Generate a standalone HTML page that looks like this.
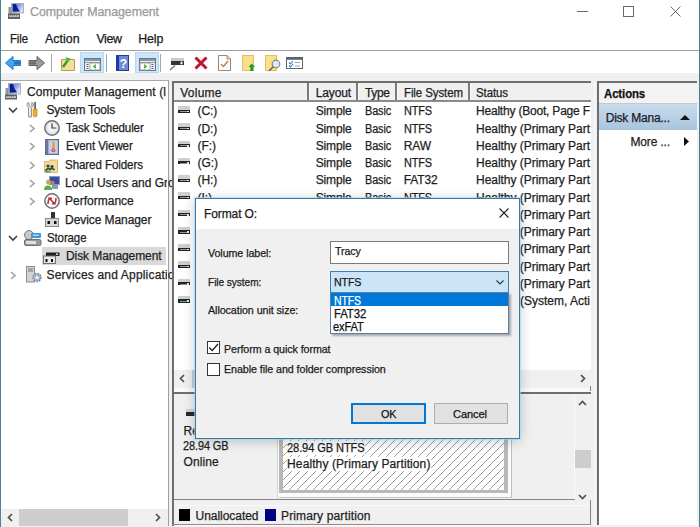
<!DOCTYPE html>
<html><head><meta charset="utf-8">
<style>
*{box-sizing:border-box;margin:0;padding:0}
html,body{width:700px;height:527px;overflow:hidden;background:#fff}
body{position:relative;font-family:"Liberation Sans",sans-serif;font-size:12px;color:#1e1e1e}
.a{position:absolute}
.t{position:absolute;white-space:nowrap;-webkit-text-stroke:0.25px currentColor}
svg{position:absolute;overflow:visible}
</style></head><body>
<div class="a" style="left:1px;top:73px;width:698px;height:454px;background:#f0f0f0;"></div>
<div class="a" style="left:0px;top:0px;width:1px;height:527px;background:#4a8698;"></div>
<div class="a" style="left:699px;top:0px;width:1px;height:527px;background:#4a7f9a;"></div>
<div class="t" style="left:30.00px;top:5.64px;font-size:12.4px;line-height:12.4px;letter-spacing:-0.065px;color:#999999;">Computer Management</div>
<div class="a" style="left:577px;top:11px;width:11px;height:1px;background:#6a6a6a;"></div>
<div class="a" style="left:623px;top:6px;width:11px;height:11px;border:1px solid #6a6a6a"></div>
<svg style="left:670px;top:6px;" width="11" height="11" viewBox="0 0 11 11"><path d="M0.5 0.5L10.5 10.5M10.5 0.5L0.5 10.5" stroke="#6a6a6a" stroke-width="1"/></svg>
<div class="t" style="left:10.30px;top:32.54px;font-size:12.4px;line-height:12.4px;letter-spacing:-0.100px;color:#1a1a1a;transform:scaleX(0.9148);transform-origin:0.00px 0;">File</div>
<div class="t" style="left:45.00px;top:32.54px;font-size:12.4px;line-height:12.4px;letter-spacing:0.048px;color:#1a1a1a;">Action</div>
<div class="t" style="left:96.40px;top:32.54px;font-size:12.4px;line-height:12.4px;letter-spacing:-0.328px;color:#1a1a1a;">View</div>
<div class="t" style="left:138.30px;top:32.54px;font-size:12.4px;line-height:12.4px;letter-spacing:-0.169px;color:#1a1a1a;">Help</div>
<div class="a" style="left:1px;top:50px;width:698px;height:1px;background:#a0a0a0;"></div>
<div class="a" style="left:1px;top:51px;width:698px;height:22px;background:#fff;"></div>
<div class="a" style="left:1px;top:80px;width:168px;height:446px;background:#fff;border-top:1px solid #a8a8a8;border-right:1px solid #a0a0a0"></div>
<div class="a" style="left:42px;top:247px;width:124px;height:18px;background:#d9d9d9;"></div>
<div class="t" style="left:27.00px;top:85.59px;font-size:12px;line-height:12px;letter-spacing:0.140px;color:#1e1e1e;">Computer Management (l</div>
<div class="t" style="left:46.50px;top:103.89px;font-size:12px;line-height:12px;letter-spacing:-0.221px;color:#1e1e1e;">System Tools</div>
<svg style="left:8px;top:106.8px;" width="10" height="6" viewBox="0 0 10 6"><path d="M1 1L5 5L9 1" fill="none" stroke="#404040" stroke-width="1.6"/></svg>
<div class="t" style="left:66.30px;top:122.19px;font-size:12px;line-height:12px;letter-spacing:-0.095px;color:#1e1e1e;transform:scaleX(0.9627);transform-origin:0.00px 0;">Task Scheduler</div>
<svg style="left:29px;top:124.1px;" width="6" height="9" viewBox="0 0 6 9"><path d="M1 1L5 4.5L1 8" fill="none" stroke="#a0a0a0" stroke-width="1.6"/></svg>
<div class="t" style="left:66.30px;top:140.49px;font-size:12px;line-height:12px;letter-spacing:-0.096px;color:#1e1e1e;transform:scaleX(0.9621);transform-origin:0.00px 0;">Event Viewer</div>
<svg style="left:29px;top:142.4px;" width="6" height="9" viewBox="0 0 6 9"><path d="M1 1L5 4.5L1 8" fill="none" stroke="#a0a0a0" stroke-width="1.6"/></svg>
<div class="t" style="left:65.10px;top:158.79px;font-size:12px;line-height:12px;letter-spacing:-0.095px;color:#1e1e1e;transform:scaleX(0.9652);transform-origin:0.00px 0;">Shared Folders</div>
<svg style="left:29px;top:160.7px;" width="6" height="9" viewBox="0 0 6 9"><path d="M1 1L5 4.5L1 8" fill="none" stroke="#a0a0a0" stroke-width="1.6"/></svg>
<div class="t" style="left:65.10px;top:177.09px;font-size:12px;line-height:12px;letter-spacing:-0.031px;color:#1e1e1e;">Local Users and Gro</div>
<svg style="left:29px;top:179.0px;" width="6" height="9" viewBox="0 0 6 9"><path d="M1 1L5 4.5L1 8" fill="none" stroke="#a0a0a0" stroke-width="1.6"/></svg>
<div class="t" style="left:65.10px;top:195.39px;font-size:12px;line-height:12px;letter-spacing:0.000px;color:#1e1e1e;">Performance</div>
<svg style="left:29px;top:197.3px;" width="6" height="9" viewBox="0 0 6 9"><path d="M1 1L5 4.5L1 8" fill="none" stroke="#a0a0a0" stroke-width="1.6"/></svg>
<div class="t" style="left:65.10px;top:213.69px;font-size:12px;line-height:12px;letter-spacing:-0.082px;color:#1e1e1e;">Device Manager</div>
<div class="t" style="left:46.50px;top:231.99px;font-size:12px;line-height:12px;letter-spacing:-0.105px;color:#1e1e1e;transform:scaleX(0.9543);transform-origin:0.00px 0;">Storage</div>
<svg style="left:8px;top:234.9px;" width="10" height="6" viewBox="0 0 10 6"><path d="M1 1L5 5L9 1" fill="none" stroke="#404040" stroke-width="1.6"/></svg>
<div class="t" style="left:66.00px;top:250.29px;font-size:12px;line-height:12px;letter-spacing:-0.079px;color:#1e1e1e;">Disk Management</div>
<div class="t" style="left:46.50px;top:268.59px;font-size:12px;line-height:12px;letter-spacing:0.179px;color:#1e1e1e;">Services and Applicatio</div>
<svg style="left:10px;top:270.5px;" width="6" height="9" viewBox="0 0 6 9"><path d="M1 1L5 4.5L1 8" fill="none" stroke="#a0a0a0" stroke-width="1.6"/></svg>
<div class="a" style="left:167px;top:81px;width:1px;height:430px;background:#fff;"></div>
<div class="a" style="left:1px;top:509px;width:167px;height:17px;background:#f0f0f0;"></div>
<div class="a" style="left:19px;top:509px;width:109px;height:17px;background:#cdcdcd;"></div>
<svg style="left:7px;top:513px;" width="6" height="9" viewBox="0 0 6 9"><path d="M5 1L1.5 4.5L5 8" fill="none" stroke="#505050" stroke-width="1.7"/></svg>
<svg style="left:155px;top:513px;" width="6" height="9" viewBox="0 0 6 9"><path d="M1 1L4.5 4.5L1 8" fill="none" stroke="#505050" stroke-width="1.7"/></svg>
<div class="a" style="left:172px;top:81px;width:419px;height:445px;background:#fff;border-left:2px solid #6e6e6e;border-top:2px solid #6e6e6e"></div>
<div class="a" style="left:172px;top:524px;width:419px;height:1px;background:#8a8a8a;"></div>
<div class="a" style="left:174px;top:83px;width:417px;height:17px;background:#f0f0f0;"></div>
<div class="a" style="left:174px;top:100px;width:417px;height:2px;background:#8a8a8a;"></div>
<div class="a" style="left:307px;top:83px;width:2px;height:17px;background:#7a7a7a;"></div>
<div class="a" style="left:309px;top:83px;width:1px;height:17px;background:#fafafa;"></div>
<div class="a" style="left:356px;top:83px;width:2px;height:17px;background:#7a7a7a;"></div>
<div class="a" style="left:358px;top:83px;width:1px;height:17px;background:#fafafa;"></div>
<div class="a" style="left:395px;top:83px;width:2px;height:17px;background:#7a7a7a;"></div>
<div class="a" style="left:397px;top:83px;width:1px;height:17px;background:#fafafa;"></div>
<div class="a" style="left:468px;top:83px;width:2px;height:17px;background:#7a7a7a;"></div>
<div class="a" style="left:470px;top:83px;width:1px;height:17px;background:#fafafa;"></div>
<div class="t" style="left:180.30px;top:86.59px;font-size:12px;line-height:12px;letter-spacing:0.216px;color:#1e1e1e;">Volume</div>
<div class="t" style="left:315.70px;top:86.59px;font-size:12px;line-height:12px;letter-spacing:-0.125px;color:#1e1e1e;">Layout</div>
<div class="t" style="left:364.90px;top:86.59px;font-size:12px;line-height:12px;letter-spacing:-0.305px;color:#1e1e1e;">Type</div>
<div class="t" style="left:403.70px;top:86.59px;font-size:12px;line-height:12px;letter-spacing:-0.094px;color:#1e1e1e;transform:scaleX(0.9557);transform-origin:0.00px 0;">File System</div>
<div class="t" style="left:476.00px;top:86.59px;font-size:12px;line-height:12px;letter-spacing:-0.102px;color:#1e1e1e;transform:scaleX(0.9549);transform-origin:0.00px 0;">Status</div>
<div class="a" style="left:178px;top:106.0px;width:12px;height:3.5px;background:#cfcfcf;"></div>
<div class="a" style="left:178px;top:109.5px;width:12px;height:3.2px;background:#1e2622;"></div>
<div class="a" style="left:180px;top:110.8px;width:8px;height:0.8px;background:#8a9a90;"></div>
<div class="a" style="left:187px;top:110.5px;width:2px;height:1.5px;background:#d8f0d8;"></div>
<div class="t" style="left:197.50px;top:105.29px;font-size:12px;line-height:12px;letter-spacing:-0.050px;color:#1e1e1e;">(C:)</div>
<div class="t" style="left:315.70px;top:105.29px;font-size:12px;line-height:12px;letter-spacing:-0.117px;color:#1e1e1e;">Simple</div>
<div class="t" style="left:364.90px;top:105.29px;font-size:12px;line-height:12px;letter-spacing:-0.110px;color:#1e1e1e;transform:scaleX(0.9066);transform-origin:0.00px 0;">Basic</div>
<div class="t" style="left:403.70px;top:105.29px;font-size:12px;line-height:12px;letter-spacing:-0.157px;color:#1e1e1e;transform:scaleX(0.9105);transform-origin:0.00px 0;">NTFS</div>
<div class="t" style="left:476.00px;top:105.29px;font-size:12px;line-height:12px;letter-spacing:-0.203px;color:#1e1e1e;">Healthy (Boot, Page F</div>
<div class="a" style="left:178px;top:123.27px;width:12px;height:3.5px;background:#cfcfcf;"></div>
<div class="a" style="left:178px;top:126.77px;width:12px;height:3.2px;background:#1e2622;"></div>
<div class="a" style="left:180px;top:128.07px;width:8px;height:0.8px;background:#8a9a90;"></div>
<div class="a" style="left:187px;top:127.77px;width:2px;height:1.5px;background:#d8f0d8;"></div>
<div class="t" style="left:197.50px;top:122.56px;font-size:12px;line-height:12px;letter-spacing:-0.050px;color:#1e1e1e;">(D:)</div>
<div class="t" style="left:315.70px;top:122.56px;font-size:12px;line-height:12px;letter-spacing:-0.117px;color:#1e1e1e;">Simple</div>
<div class="t" style="left:364.90px;top:122.56px;font-size:12px;line-height:12px;letter-spacing:-0.110px;color:#1e1e1e;transform:scaleX(0.9066);transform-origin:0.00px 0;">Basic</div>
<div class="t" style="left:403.70px;top:122.56px;font-size:12px;line-height:12px;letter-spacing:-0.157px;color:#1e1e1e;transform:scaleX(0.9105);transform-origin:0.00px 0;">NTFS</div>
<div class="t" style="left:476.00px;top:122.56px;font-size:12px;line-height:12px;letter-spacing:-0.035px;color:#1e1e1e;">Healthy (Primary Part</div>
<div class="a" style="left:178px;top:140.54px;width:12px;height:3.5px;background:#cfcfcf;"></div>
<div class="a" style="left:178px;top:144.04px;width:12px;height:3.2px;background:#1e2622;"></div>
<div class="a" style="left:180px;top:145.34px;width:8px;height:0.8px;background:#8a9a90;"></div>
<div class="a" style="left:187px;top:145.04px;width:2px;height:1.5px;background:#d8f0d8;"></div>
<div class="t" style="left:197.50px;top:139.83px;font-size:12px;line-height:12px;letter-spacing:-0.050px;color:#1e1e1e;">(F:)</div>
<div class="t" style="left:315.70px;top:139.83px;font-size:12px;line-height:12px;letter-spacing:-0.117px;color:#1e1e1e;">Simple</div>
<div class="t" style="left:364.90px;top:139.83px;font-size:12px;line-height:12px;letter-spacing:-0.110px;color:#1e1e1e;transform:scaleX(0.9066);transform-origin:0.00px 0;">Basic</div>
<div class="t" style="left:403.70px;top:139.83px;font-size:12px;line-height:12px;letter-spacing:-0.100px;color:#1e1e1e;">RAW</div>
<div class="t" style="left:476.00px;top:139.83px;font-size:12px;line-height:12px;letter-spacing:-0.035px;color:#1e1e1e;">Healthy (Primary Part</div>
<div class="a" style="left:178px;top:157.81px;width:12px;height:3.5px;background:#cfcfcf;"></div>
<div class="a" style="left:178px;top:161.31px;width:12px;height:3.2px;background:#1e2622;"></div>
<div class="a" style="left:180px;top:162.61px;width:8px;height:0.8px;background:#8a9a90;"></div>
<div class="a" style="left:187px;top:162.31px;width:2px;height:1.5px;background:#d8f0d8;"></div>
<div class="t" style="left:197.50px;top:157.10px;font-size:12px;line-height:12px;letter-spacing:-0.050px;color:#1e1e1e;">(G:)</div>
<div class="t" style="left:315.70px;top:157.10px;font-size:12px;line-height:12px;letter-spacing:-0.117px;color:#1e1e1e;">Simple</div>
<div class="t" style="left:364.90px;top:157.10px;font-size:12px;line-height:12px;letter-spacing:-0.110px;color:#1e1e1e;transform:scaleX(0.9066);transform-origin:0.00px 0;">Basic</div>
<div class="t" style="left:403.70px;top:157.10px;font-size:12px;line-height:12px;letter-spacing:-0.157px;color:#1e1e1e;transform:scaleX(0.9105);transform-origin:0.00px 0;">NTFS</div>
<div class="t" style="left:476.00px;top:157.10px;font-size:12px;line-height:12px;letter-spacing:-0.035px;color:#1e1e1e;">Healthy (Primary Part</div>
<div class="a" style="left:178px;top:175.08px;width:12px;height:3.5px;background:#cfcfcf;"></div>
<div class="a" style="left:178px;top:178.58px;width:12px;height:3.2px;background:#1e2622;"></div>
<div class="a" style="left:180px;top:179.88px;width:8px;height:0.8px;background:#8a9a90;"></div>
<div class="a" style="left:187px;top:179.58px;width:2px;height:1.5px;background:#d8f0d8;"></div>
<div class="t" style="left:197.50px;top:174.37px;font-size:12px;line-height:12px;letter-spacing:-0.050px;color:#1e1e1e;">(H:)</div>
<div class="t" style="left:315.70px;top:174.37px;font-size:12px;line-height:12px;letter-spacing:-0.117px;color:#1e1e1e;">Simple</div>
<div class="t" style="left:364.90px;top:174.37px;font-size:12px;line-height:12px;letter-spacing:-0.110px;color:#1e1e1e;transform:scaleX(0.9066);transform-origin:0.00px 0;">Basic</div>
<div class="t" style="left:403.70px;top:174.37px;font-size:12px;line-height:12px;letter-spacing:-0.100px;color:#1e1e1e;">FAT32</div>
<div class="t" style="left:476.00px;top:174.37px;font-size:12px;line-height:12px;letter-spacing:-0.035px;color:#1e1e1e;">Healthy (Primary Part</div>
<div class="a" style="left:178px;top:192.35px;width:12px;height:3.5px;background:#cfcfcf;"></div>
<div class="a" style="left:178px;top:195.85px;width:12px;height:3.2px;background:#1e2622;"></div>
<div class="a" style="left:180px;top:197.15px;width:8px;height:0.8px;background:#8a9a90;"></div>
<div class="a" style="left:187px;top:196.85px;width:2px;height:1.5px;background:#d8f0d8;"></div>
<div class="t" style="left:197.50px;top:191.64px;font-size:12px;line-height:12px;letter-spacing:-0.050px;color:#1e1e1e;">(I:)</div>
<div class="t" style="left:315.70px;top:191.64px;font-size:12px;line-height:12px;letter-spacing:-0.117px;color:#1e1e1e;">Simple</div>
<div class="t" style="left:364.90px;top:191.64px;font-size:12px;line-height:12px;letter-spacing:-0.110px;color:#1e1e1e;transform:scaleX(0.9066);transform-origin:0.00px 0;">Basic</div>
<div class="t" style="left:403.70px;top:191.64px;font-size:12px;line-height:12px;letter-spacing:-0.157px;color:#1e1e1e;transform:scaleX(0.9105);transform-origin:0.00px 0;">NTFS</div>
<div class="t" style="left:476.00px;top:191.64px;font-size:12px;line-height:12px;letter-spacing:-0.035px;color:#1e1e1e;">Healthy (Primary Part</div>
<div class="a" style="left:178px;top:209.62px;width:12px;height:3.5px;background:#cfcfcf;"></div>
<div class="a" style="left:178px;top:213.12px;width:12px;height:3.2px;background:#1e2622;"></div>
<div class="a" style="left:180px;top:214.42px;width:8px;height:0.8px;background:#8a9a90;"></div>
<div class="a" style="left:187px;top:214.12px;width:2px;height:1.5px;background:#d8f0d8;"></div>
<div class="t" style="left:197.50px;top:208.91px;font-size:12px;line-height:12px;letter-spacing:-0.050px;color:#1e1e1e;">(J:)</div>
<div class="t" style="left:315.70px;top:208.91px;font-size:12px;line-height:12px;letter-spacing:-0.117px;color:#1e1e1e;">Simple</div>
<div class="t" style="left:364.90px;top:208.91px;font-size:12px;line-height:12px;letter-spacing:-0.110px;color:#1e1e1e;transform:scaleX(0.9066);transform-origin:0.00px 0;">Basic</div>
<div class="t" style="left:403.70px;top:208.91px;font-size:12px;line-height:12px;letter-spacing:-0.157px;color:#1e1e1e;transform:scaleX(0.9105);transform-origin:0.00px 0;">NTFS</div>
<div class="t" style="left:476.00px;top:208.91px;font-size:12px;line-height:12px;letter-spacing:-0.035px;color:#1e1e1e;">Healthy (Primary Part</div>
<div class="a" style="left:178px;top:226.89px;width:12px;height:3.5px;background:#cfcfcf;"></div>
<div class="a" style="left:178px;top:230.39px;width:12px;height:3.2px;background:#1e2622;"></div>
<div class="a" style="left:180px;top:231.69px;width:8px;height:0.8px;background:#8a9a90;"></div>
<div class="a" style="left:187px;top:231.39px;width:2px;height:1.5px;background:#d8f0d8;"></div>
<div class="t" style="left:197.50px;top:226.18px;font-size:12px;line-height:12px;letter-spacing:-0.050px;color:#1e1e1e;">(K:)</div>
<div class="t" style="left:315.70px;top:226.18px;font-size:12px;line-height:12px;letter-spacing:-0.117px;color:#1e1e1e;">Simple</div>
<div class="t" style="left:364.90px;top:226.18px;font-size:12px;line-height:12px;letter-spacing:-0.110px;color:#1e1e1e;transform:scaleX(0.9066);transform-origin:0.00px 0;">Basic</div>
<div class="t" style="left:403.70px;top:226.18px;font-size:12px;line-height:12px;letter-spacing:-0.157px;color:#1e1e1e;transform:scaleX(0.9105);transform-origin:0.00px 0;">NTFS</div>
<div class="t" style="left:476.00px;top:226.18px;font-size:12px;line-height:12px;letter-spacing:-0.035px;color:#1e1e1e;">Healthy (Primary Part</div>
<div class="a" style="left:178px;top:244.16px;width:12px;height:3.5px;background:#cfcfcf;"></div>
<div class="a" style="left:178px;top:247.66px;width:12px;height:3.2px;background:#1e2622;"></div>
<div class="a" style="left:180px;top:248.96px;width:8px;height:0.8px;background:#8a9a90;"></div>
<div class="a" style="left:187px;top:248.66px;width:2px;height:1.5px;background:#d8f0d8;"></div>
<div class="t" style="left:197.50px;top:243.45px;font-size:12px;line-height:12px;letter-spacing:-0.050px;color:#1e1e1e;">(L:)</div>
<div class="t" style="left:315.70px;top:243.45px;font-size:12px;line-height:12px;letter-spacing:-0.117px;color:#1e1e1e;">Simple</div>
<div class="t" style="left:364.90px;top:243.45px;font-size:12px;line-height:12px;letter-spacing:-0.110px;color:#1e1e1e;transform:scaleX(0.9066);transform-origin:0.00px 0;">Basic</div>
<div class="t" style="left:403.70px;top:243.45px;font-size:12px;line-height:12px;letter-spacing:-0.157px;color:#1e1e1e;transform:scaleX(0.9105);transform-origin:0.00px 0;">NTFS</div>
<div class="t" style="left:476.00px;top:243.45px;font-size:12px;line-height:12px;letter-spacing:-0.035px;color:#1e1e1e;">Healthy (Primary Part</div>
<div class="a" style="left:178px;top:261.43px;width:12px;height:3.5px;background:#cfcfcf;"></div>
<div class="a" style="left:178px;top:264.93px;width:12px;height:3.2px;background:#1e2622;"></div>
<div class="a" style="left:180px;top:266.23px;width:8px;height:0.8px;background:#8a9a90;"></div>
<div class="a" style="left:187px;top:265.93px;width:2px;height:1.5px;background:#d8f0d8;"></div>
<div class="t" style="left:197.50px;top:260.72px;font-size:12px;line-height:12px;letter-spacing:-0.050px;color:#1e1e1e;">(M:)</div>
<div class="t" style="left:315.70px;top:260.72px;font-size:12px;line-height:12px;letter-spacing:-0.117px;color:#1e1e1e;">Simple</div>
<div class="t" style="left:364.90px;top:260.72px;font-size:12px;line-height:12px;letter-spacing:-0.110px;color:#1e1e1e;transform:scaleX(0.9066);transform-origin:0.00px 0;">Basic</div>
<div class="t" style="left:403.70px;top:260.72px;font-size:12px;line-height:12px;letter-spacing:-0.157px;color:#1e1e1e;transform:scaleX(0.9105);transform-origin:0.00px 0;">NTFS</div>
<div class="t" style="left:476.00px;top:260.72px;font-size:12px;line-height:12px;letter-spacing:-0.035px;color:#1e1e1e;">Healthy (Primary Part</div>
<div class="a" style="left:178px;top:278.7px;width:12px;height:3.5px;background:#cfcfcf;"></div>
<div class="a" style="left:178px;top:282.2px;width:12px;height:3.2px;background:#1e2622;"></div>
<div class="a" style="left:180px;top:283.5px;width:8px;height:0.8px;background:#8a9a90;"></div>
<div class="a" style="left:187px;top:283.2px;width:2px;height:1.5px;background:#d8f0d8;"></div>
<div class="t" style="left:197.50px;top:277.99px;font-size:12px;line-height:12px;letter-spacing:-0.050px;color:#1e1e1e;">(N:)</div>
<div class="t" style="left:315.70px;top:277.99px;font-size:12px;line-height:12px;letter-spacing:-0.117px;color:#1e1e1e;">Simple</div>
<div class="t" style="left:364.90px;top:277.99px;font-size:12px;line-height:12px;letter-spacing:-0.110px;color:#1e1e1e;transform:scaleX(0.9066);transform-origin:0.00px 0;">Basic</div>
<div class="t" style="left:403.70px;top:277.99px;font-size:12px;line-height:12px;letter-spacing:-0.157px;color:#1e1e1e;transform:scaleX(0.9105);transform-origin:0.00px 0;">NTFS</div>
<div class="t" style="left:476.00px;top:277.99px;font-size:12px;line-height:12px;letter-spacing:-0.035px;color:#1e1e1e;">Healthy (Primary Part</div>
<div class="a" style="left:178px;top:295.97px;width:12px;height:3.5px;background:#cfcfcf;"></div>
<div class="a" style="left:178px;top:299.47px;width:12px;height:3.2px;background:#1e2622;"></div>
<div class="a" style="left:180px;top:300.77px;width:8px;height:0.8px;background:#8a9a90;"></div>
<div class="a" style="left:187px;top:300.47px;width:2px;height:1.5px;background:#d8f0d8;"></div>
<div class="t" style="left:197.50px;top:295.26px;font-size:12px;line-height:12px;letter-spacing:-0.050px;color:#1e1e1e;"></div>
<div class="t" style="left:315.70px;top:295.26px;font-size:12px;line-height:12px;letter-spacing:-0.117px;color:#1e1e1e;">Simple</div>
<div class="t" style="left:364.90px;top:295.26px;font-size:12px;line-height:12px;letter-spacing:-0.110px;color:#1e1e1e;transform:scaleX(0.9066);transform-origin:0.00px 0;">Basic</div>
<div class="t" style="left:403.70px;top:295.26px;font-size:12px;line-height:12px;letter-spacing:-0.157px;color:#1e1e1e;transform:scaleX(0.9105);transform-origin:0.00px 0;">NTFS</div>
<div class="t" style="left:476.00px;top:295.26px;font-size:12px;line-height:12px;letter-spacing:-0.002px;color:#1e1e1e;">Healthy (System, Acti</div>
<div class="a" style="left:591px;top:83px;width:5px;height:443px;background:#f0f0f0;"></div>
<div class="a" style="left:594px;top:83px;width:1px;height:443px;background:#fafafa;"></div>
<div class="a" style="left:174px;top:370px;width:417px;height:18px;background:#f0f0f0;"></div>
<div class="a" style="left:192px;top:370px;width:200px;height:18px;background:#cdcdcd;"></div>
<svg style="left:179px;top:374px;" width="6" height="9" viewBox="0 0 6 9"><path d="M5 1L1.5 4.5L5 8" fill="none" stroke="#505050" stroke-width="1.7"/></svg>
<svg style="left:580px;top:374px;" width="6" height="9" viewBox="0 0 6 9"><path d="M1 1L4.5 4.5L1 8" fill="none" stroke="#505050" stroke-width="1.7"/></svg>
<div class="a" style="left:174px;top:388px;width:417px;height:4px;background:#fafafa;"></div>
<div class="a" style="left:590px;top:386px;width:1px;height:5px;background:#808080;"></div>
<div class="a" style="left:174px;top:392px;width:417px;height:2px;background:#6e6e6e;"></div>
<div class="a" style="left:174px;top:394px;width:417px;height:105px;background:#f0f0f0;"></div>
<div class="a" style="left:277px;top:394px;width:1px;height:105px;background:#d4d4d4;"></div>
<div class="a" style="left:278px;top:394px;width:1px;height:105px;background:#fafafa;"></div>
<div class="a" style="left:186px;top:408.8px;width:12px;height:3px;background:#d4d4d4;"></div>
<div class="a" style="left:186px;top:411.8px;width:12px;height:3.8px;background:#2a2a2a;"></div>
<div class="t" style="left:183.60px;top:424.99px;font-size:12px;line-height:12px;letter-spacing:-0.100px;color:#1e1e1e;">Removable</div>
<div class="t" style="left:183.10px;top:440.29px;font-size:12px;line-height:12px;letter-spacing:-0.109px;color:#1e1e1e;transform:scaleX(0.9111);transform-origin:0.00px 0;">28.94 GB</div>
<div class="t" style="left:183.60px;top:455.69px;font-size:12px;line-height:12px;letter-spacing:0.062px;color:#1e1e1e;">Online</div>
<div class="a" style="left:279px;top:395px;width:233px;height:103px;background:#fbfbfb;border-right:1px solid #c0c0c0;border-bottom:1px solid #c8c8c8"></div>
<div class="a" style="left:279px;top:396px;width:229px;height:97px;background:#b8b8b8"></div>
<div class="a" style="left:283px;top:400px;width:221px;height:90px;background:#fff;overflow:hidden"><svg width="221" height="90" style="left:0;top:0"><path d="M-120 120L0 0" stroke="#8a8a8a" stroke-width="0.8"/><path d="M-112 120L8 0" stroke="#8a8a8a" stroke-width="0.8"/><path d="M-104 120L16 0" stroke="#8a8a8a" stroke-width="0.8"/><path d="M-96 120L24 0" stroke="#8a8a8a" stroke-width="0.8"/><path d="M-88 120L32 0" stroke="#8a8a8a" stroke-width="0.8"/><path d="M-80 120L40 0" stroke="#8a8a8a" stroke-width="0.8"/><path d="M-72 120L48 0" stroke="#8a8a8a" stroke-width="0.8"/><path d="M-64 120L56 0" stroke="#8a8a8a" stroke-width="0.8"/><path d="M-56 120L64 0" stroke="#8a8a8a" stroke-width="0.8"/><path d="M-48 120L72 0" stroke="#8a8a8a" stroke-width="0.8"/><path d="M-40 120L80 0" stroke="#8a8a8a" stroke-width="0.8"/><path d="M-32 120L88 0" stroke="#8a8a8a" stroke-width="0.8"/><path d="M-24 120L96 0" stroke="#8a8a8a" stroke-width="0.8"/><path d="M-16 120L104 0" stroke="#8a8a8a" stroke-width="0.8"/><path d="M-8 120L112 0" stroke="#8a8a8a" stroke-width="0.8"/><path d="M0 120L120 0" stroke="#8a8a8a" stroke-width="0.8"/><path d="M8 120L128 0" stroke="#8a8a8a" stroke-width="0.8"/><path d="M16 120L136 0" stroke="#8a8a8a" stroke-width="0.8"/><path d="M24 120L144 0" stroke="#8a8a8a" stroke-width="0.8"/><path d="M32 120L152 0" stroke="#8a8a8a" stroke-width="0.8"/><path d="M40 120L160 0" stroke="#8a8a8a" stroke-width="0.8"/><path d="M48 120L168 0" stroke="#8a8a8a" stroke-width="0.8"/><path d="M56 120L176 0" stroke="#8a8a8a" stroke-width="0.8"/><path d="M64 120L184 0" stroke="#8a8a8a" stroke-width="0.8"/><path d="M72 120L192 0" stroke="#8a8a8a" stroke-width="0.8"/><path d="M80 120L200 0" stroke="#8a8a8a" stroke-width="0.8"/><path d="M88 120L208 0" stroke="#8a8a8a" stroke-width="0.8"/><path d="M96 120L216 0" stroke="#8a8a8a" stroke-width="0.8"/><path d="M104 120L224 0" stroke="#8a8a8a" stroke-width="0.8"/><path d="M112 120L232 0" stroke="#8a8a8a" stroke-width="0.8"/><path d="M120 120L240 0" stroke="#8a8a8a" stroke-width="0.8"/><path d="M128 120L248 0" stroke="#8a8a8a" stroke-width="0.8"/><path d="M136 120L256 0" stroke="#8a8a8a" stroke-width="0.8"/><path d="M144 120L264 0" stroke="#8a8a8a" stroke-width="0.8"/><path d="M152 120L272 0" stroke="#8a8a8a" stroke-width="0.8"/><path d="M160 120L280 0" stroke="#8a8a8a" stroke-width="0.8"/><path d="M168 120L288 0" stroke="#8a8a8a" stroke-width="0.8"/><path d="M176 120L296 0" stroke="#8a8a8a" stroke-width="0.8"/><path d="M184 120L304 0" stroke="#8a8a8a" stroke-width="0.8"/><path d="M192 120L312 0" stroke="#8a8a8a" stroke-width="0.8"/><path d="M200 120L320 0" stroke="#8a8a8a" stroke-width="0.8"/><path d="M208 120L328 0" stroke="#8a8a8a" stroke-width="0.8"/><path d="M216 120L336 0" stroke="#8a8a8a" stroke-width="0.8"/><path d="M224 120L344 0" stroke="#8a8a8a" stroke-width="0.8"/><path d="M232 120L352 0" stroke="#8a8a8a" stroke-width="0.8"/></svg></div>
<div class="t" style="left:287.10px;top:442.09px;font-size:12px;line-height:12px;letter-spacing:-0.107px;color:#1e1e1e;transform:scaleX(0.9240);transform-origin:0.00px 0;"><span style="background:#fff">28.94 GB NTFS</span></div>
<div class="t" style="left:287.10px;top:457.89px;font-size:12px;line-height:12px;letter-spacing:0.100px;color:#1e1e1e;"><span style="background:#fff">Healthy (Primary Partition)</span></div>
<div class="a" style="left:574px;top:394px;width:1px;height:110px;background:#fafafa;"></div>
<div class="a" style="left:575px;top:394px;width:16px;height:110px;background:#f0f0f0;"></div>
<div class="a" style="left:575px;top:450px;width:16px;height:18px;background:#cdcdcd;"></div>
<svg style="left:578px;top:400px;" width="9" height="6" viewBox="0 0 9 6"><path d="M1 5L4.5 1.5L8 5" fill="none" stroke="#505050" stroke-width="1.7"/></svg>
<svg style="left:578px;top:494px;" width="9" height="6" viewBox="0 0 9 6"><path d="M1 1L4.5 4.5L8 1" fill="none" stroke="#505050" stroke-width="1.7"/></svg>
<div class="a" style="left:174px;top:499px;width:401px;height:1px;background:#858585;"></div>
<div class="a" style="left:174px;top:500px;width:417px;height:24px;background:#f0f0f0;"></div>
<div class="a" style="left:175px;top:505px;width:415px;height:1px;background:#fafafa;"></div>
<div class="a" style="left:179px;top:509px;width:11px;height:12px;background:#000;"></div>
<div class="t" style="left:195.50px;top:509.59px;font-size:12px;line-height:12px;letter-spacing:-0.037px;color:#1e1e1e;">Unallocated</div>
<div class="a" style="left:265px;top:509px;width:11px;height:12px;background:#000080;"></div>
<div class="t" style="left:281.00px;top:509.59px;font-size:12px;line-height:12px;letter-spacing:0.128px;color:#1e1e1e;">Primary partition</div>
<div class="a" style="left:590px;top:500px;width:1px;height:25px;background:#808080;"></div>
<div class="a" style="left:597px;top:81px;width:100px;height:445px;background:#fff;border-left:2px solid #6e6e6e;border-top:2px solid #6e6e6e"></div>
<div class="a" style="left:597px;top:525px;width:102px;height:2px;background:#f0f0f0;"></div>
<div class="a" style="left:599px;top:83px;width:98px;height:20px;background:#f3f3f3;"></div>
<div class="a" style="left:599px;top:103px;width:98px;height:1px;background:#c8c8c8;"></div>
<div class="t" style="left:603.80px;top:87.99px;font-size:12px;line-height:12px;letter-spacing:-0.110px;color:#111;transform:scaleX(0.9505);transform-origin:0.00px 0;font-weight:bold">Actions</div>
<div class="a" style="left:599px;top:104px;width:98px;height:26px;background:linear-gradient(#c9dcee,#a9c4dd)"></div>
<div class="t" style="left:605.70px;top:111.59px;font-size:12px;line-height:12px;letter-spacing:-0.217px;color:#1a1a2a;">Disk Mana...</div>
<svg style="left:680px;top:115px;" width="10" height="5" viewBox="0 0 10 5"><path d="M0 5L5 0L10 5Z" fill="#111"/></svg>
<div class="t" style="left:630.50px;top:135.99px;font-size:12px;line-height:12px;letter-spacing:-0.169px;color:#1e1e1e;">More ...</div>
<svg style="left:684px;top:137px;" width="5" height="9" viewBox="0 0 5 9"><path d="M0 0L5 4.5L0 9Z" fill="#111"/></svg>
<div class="a" style="left:195px;top:198px;width:325px;height:241px;background:#f0f0f0;border:1px solid #3a78aa;box-shadow:0 0 0 1px rgba(170,215,240,0.6),0 2px 12px rgba(0,0,0,0.22)"></div>
<div class="a" style="left:196px;top:199px;width:323px;height:30px;background:#fff;"></div>
<div class="t" style="left:204.40px;top:207.94px;font-size:12.4px;line-height:12.4px;letter-spacing:-0.105px;color:#1a1a1a;transform:scaleX(0.9677);transform-origin:0.00px 0;">Format O:</div>
<svg style="left:499px;top:208px;" width="10" height="10" viewBox="0 0 10 10"><path d="M0.5 0.5L9.5 9.5M9.5 0.5L0.5 9.5" stroke="#222" stroke-width="1.1"/></svg>
<div class="t" style="left:207.60px;top:247.68px;font-size:11.2px;line-height:11.2px;letter-spacing:-0.084px;color:#1a1a1a;transform:scaleX(0.9572);transform-origin:0.00px 0;">Volume label:</div>
<div class="t" style="left:207.60px;top:276.68px;font-size:11.2px;line-height:11.2px;letter-spacing:-0.081px;color:#1a1a1a;transform:scaleX(0.9075);transform-origin:0.00px 0;">File system:</div>
<div class="t" style="left:207.60px;top:304.68px;font-size:11.2px;line-height:11.2px;letter-spacing:-0.072px;color:#1a1a1a;transform:scaleX(0.9573);transform-origin:0.00px 0;">Allocation unit size:</div>
<div class="a" style="left:330px;top:241px;width:179px;height:23px;background:#fff;border:1px solid #7a7a7a"></div>
<div class="t" style="left:335.00px;top:246.18px;font-size:11.2px;line-height:11.2px;letter-spacing:-0.103px;color:#1a1a1a;transform:scaleX(0.9495);transform-origin:0.00px 0;">Tracy</div>
<div class="a" style="left:330px;top:271px;width:179px;height:22px;background:#cce4f7;border:1px solid #3c7fb1"></div>
<div class="t" style="left:334.30px;top:276.61px;font-size:11.8px;line-height:11.8px;letter-spacing:-0.154px;color:#1a1a1a;transform:scaleX(0.9062);transform-origin:0.00px 0;">NTFS</div>
<svg style="left:496px;top:280px;" width="8" height="5" viewBox="0 0 8 5"><path d="M0.5 0.5L4 4L7.5 0.5" fill="none" stroke="#333" stroke-width="1.1"/></svg>
<div class="a" style="left:330px;top:292px;width:179px;height:42px;background:#fff;border:1px solid #5a7ea8;box-shadow:2px 2px 2px rgba(0,0,0,0.3)"></div>
<div class="a" style="left:331px;top:293px;width:177px;height:13px;background:#0078d7;"></div>
<div class="t" style="left:334.00px;top:294.77px;font-size:12.2px;line-height:12.2px;letter-spacing:-0.159px;color:#fff;transform:scaleX(0.8605);transform-origin:0.00px 0;">NTFS</div>
<div class="t" style="left:333.50px;top:307.77px;font-size:12.2px;line-height:12.2px;letter-spacing:-0.131px;color:#111;transform:scaleX(0.9359);transform-origin:0.00px 0;">FAT32</div>
<div class="t" style="left:333.00px;top:320.57px;font-size:12.2px;line-height:12.2px;letter-spacing:-0.129px;color:#111;transform:scaleX(0.9105);transform-origin:0.00px 0;">exFAT</div>
<div class="a" style="left:207px;top:341px;width:13px;height:13px;background:#fff;border:1px solid #333"></div>
<svg style="left:208px;top:342px;" width="11" height="11" viewBox="0 0 11 11"><path d="M1.2 5.5L4.2 8.5L10 2" fill="none" stroke="#222" stroke-width="1.3"/></svg>
<div class="t" style="left:224.00px;top:343.68px;font-size:11.2px;line-height:11.2px;letter-spacing:-0.081px;color:#1a1a1a;transform:scaleX(0.9563);transform-origin:0.00px 0;">Perform a quick format</div>
<div class="a" style="left:207px;top:363px;width:13px;height:13px;background:#fff;border:1px solid #333"></div>
<div class="t" style="left:224.00px;top:364.38px;font-size:11.2px;line-height:11.2px;letter-spacing:-0.078px;color:#1a1a1a;transform:scaleX(0.9571);transform-origin:0.00px 0;">Enable file and folder compression</div>
<div class="a" style="left:351px;top:403px;width:75px;height:21px;background:#e1e1e1;border:2px solid #0078d7"></div>
<div class="t" style="left:380.60px;top:407.94px;font-size:11.6px;line-height:11.6px;letter-spacing:-0.251px;color:#111;transform:scaleX(0.9327);transform-origin:0.00px 0;">OK</div>
<div class="a" style="left:434px;top:403px;width:74px;height:21px;background:#e1e1e1;border:1px solid #adadad"></div>
<div class="t" style="left:453.00px;top:407.94px;font-size:11.6px;line-height:11.6px;letter-spacing:-0.108px;color:#111;transform:scaleX(0.9559);transform-origin:0.00px 0;">Cancel</div>
<svg style="left:7px;top:2px;" width="18" height="18" viewBox="0 0 18 18"><defs><linearGradient id="scr" x1="0" y1="0" x2="1" y2="0.6"><stop offset="0" stop-color="#5a6ed8"/><stop offset="0.55" stop-color="#8a9ae8"/><stop offset="1" stop-color="#dde4fa"/></linearGradient></defs><rect x="4" y="1" width="13" height="10.5" fill="#a8b0c0"/><rect x="5" y="2" width="11" height="8.5" fill="url(#scr)"/><path d="M6 2H9L10.5 6L13 9.5H6Z" fill="#0e1e8a"/><rect x="1.5" y="5" width="3" height="7" fill="#8a9a8a"/><rect x="1" y="11.5" width="12" height="5.5" fill="#5e6462"/><rect x="2" y="13" width="10" height="2" fill="#b8bcc0"/><path d="M3 13h1M5 13h1M7 13h1M9 13h1" stroke="#555" stroke-width="1"/></svg>
<svg style="left:5px;top:56px;" width="17" height="15" viewBox="0 0 17 15"><path d="M0.5 7L8 0.5V4.5H15.5V9.5H8V13.5Z" fill="#3fa8ee" stroke="#2a78b8" stroke-width="1"/><rect x="9" y="5.5" width="6" height="3" fill="#1e74c8"/></svg>
<svg style="left:28px;top:56px;" width="17" height="15" viewBox="0 0 17 15"><path d="M16.5 7L9 0.5V4.5H1V9.5H9V13.5Z" fill="#9a9a9a" stroke="#5e5e5e" stroke-width="1"/><rect x="2" y="5.5" width="6" height="3" fill="#6e6e6e"/></svg>
<div class="a" style="left:51px;top:54px;width:1px;height:18px;background:#a8a8a8;"></div>
<svg style="left:61px;top:56px;" width="15" height="16" viewBox="0 0 15 16"><path d="M0.5 3.5H13.5V14.5H0.5Z" fill="#f6dc94" stroke="#b89a5a" stroke-width="1"/><path d="M2 11L7 4" stroke="#2e9a2e" stroke-width="2.4"/><path d="M4.5 1L10 2.5L6.5 7Z" fill="#4cbf3c"/></svg>
<div class="a" style="left:80px;top:52px;width:24px;height:21px;background:#cce6fa;border:1px solid #b4d8f4"></div>
<div class="a" style="left:135px;top:52px;width:24px;height:21px;background:#cce6fa;border:1px solid #b4d8f4"></div>
<svg style="left:84px;top:58px;" width="17" height="13" viewBox="0 0 17 13"><rect x="0.5" y="0.5" width="16" height="12" fill="#eef0f2" stroke="#6a7682"/><rect x="1" y="1" width="15" height="2" fill="#8a96a2"/><path d="M1 4.5H16" stroke="#8a939c"/><rect x="6" y="5" width="10" height="7" fill="#fff" stroke="#8a939c" stroke-width="0.8"/><path d="M2.5 6.5h2M2.5 8.5h2M2.5 10.5h2" stroke="#5c6670"/><path d="M12 6L8.5 8.5L12 11Z" fill="#5fb040"/></svg>
<div class="a" style="left:106px;top:54px;width:1px;height:18px;background:#a8a8a8;"></div>
<svg style="left:116px;top:55px;" width="13" height="16" viewBox="0 0 13 16"><rect x="0" y="0" width="13" height="16" fill="#223c9c"/><rect x="3" y="1" width="9" height="14" fill="#6f8ad4"/><text x="7.5" y="12.5" font-family="Liberation Sans" font-weight="bold" font-size="12" fill="#fff" text-anchor="middle">?</text></svg>
<svg style="left:139px;top:58px;" width="17" height="13" viewBox="0 0 17 13"><rect x="0.5" y="0.5" width="16" height="12" fill="#eef0f2" stroke="#6a7682"/><rect x="1" y="1" width="15" height="2" fill="#8a96a2"/><path d="M1 4.5H16" stroke="#8a939c"/><rect x="1" y="5" width="10" height="7" fill="#fff" stroke="#8a939c" stroke-width="0.8"/><path d="M12.5 6.5h2M12.5 8.5h2M12.5 10.5h2" stroke="#5c6670"/><path d="M5 6L8.5 8.5L5 11Z" fill="#5fb040"/></svg>
<div class="a" style="left:160px;top:54px;width:1px;height:18px;background:#a8a8a8;"></div>
<svg style="left:169px;top:57px;" width="17" height="14" viewBox="0 0 17 14"><rect x="2" y="1" width="13" height="4" fill="#c8ccd0"/><rect x="2" y="4" width="13" height="4" fill="#2e3438"/><path d="M11 6h3M12.5 4.5v3" stroke="#fff" stroke-width="1"/><path d="M1 13L6 8.5" stroke="#707880" stroke-width="1.4"/></svg>
<svg style="left:194px;top:56px;" width="14" height="14" viewBox="0 0 14 14"><path d="M1.5 1.5L12.5 12.5M12.5 1.5L1.5 12.5" stroke="#c4122e" stroke-width="3"/></svg>
<svg style="left:218px;top:55px;" width="13" height="16" viewBox="0 0 13 16"><path d="M0.5 0.5H9L12.5 4V15.5H0.5Z" fill="#fdfbf8" stroke="#8a8a8a"/><path d="M9 0.5V4H12.5" fill="none" stroke="#8a8a8a"/><path d="M3 9L5.5 11.5L10 6" fill="none" stroke="#c87850" stroke-width="1.4"/></svg>
<svg style="left:242px;top:55px;" width="14" height="17" viewBox="0 0 14 17"><rect x="0.5" y="0.5" width="11" height="15" fill="#fbe08a" stroke="#dcc070"/><path d="M6.5 12H13L9.8 8.5Z" fill="#1e9e2e"/><rect x="8.3" y="11" width="3" height="5" fill="#1e9e2e"/></svg>
<svg style="left:265px;top:55px;" width="16" height="17" viewBox="0 0 16 17"><rect x="0.5" y="0.5" width="11" height="15" fill="#fbe08a" stroke="#dcc070"/><circle cx="11" cy="9" r="3.8" fill="#dfe8ec" stroke="#7a8a90" stroke-width="1.2"/><path d="M8.5 11.5L4 16" stroke="#6a5a40" stroke-width="1.5"/></svg>
<svg style="left:286px;top:57px;" width="17" height="12" viewBox="0 0 17 12"><rect x="0.5" y="0.5" width="16" height="11" fill="#fff" stroke="#5c6670"/><rect x="1" y="1" width="15" height="1.8" fill="#5c6670"/><path d="M3 5.5L4.5 7L7 4M3 8.5L4.5 10L7 7" fill="none" stroke="#3a78c8" stroke-width="1.1"/><path d="M8.5 5.5H14M8.5 9H14" stroke="#9aa4ae"/></svg>
<svg style="left:5px;top:83px;" width="17" height="17" viewBox="0 0 17 17"><defs><linearGradient id="scr2" x1="0" y1="0" x2="1" y2="0.6"><stop offset="0" stop-color="#5a6ed8"/><stop offset="0.55" stop-color="#8a9ae8"/><stop offset="1" stop-color="#dde4fa"/></linearGradient></defs><rect x="3" y="0" width="13" height="11.5" fill="#a8b0c0"/><rect x="4" y="1" width="11" height="9.5" fill="url(#scr2)"/><path d="M5 1H8L9.5 5.5L12 9.5H5Z" fill="#0e1e8a"/><rect x="0.5" y="5" width="3" height="7" fill="#8a9a8a"/><rect x="0" y="11.5" width="12" height="5" fill="#5e6462"/><rect x="1" y="13" width="10" height="2" fill="#b8bcc0"/><path d="M2 13h1M4 13h1M6 13h1M8 13h1" stroke="#555" stroke-width="1"/></svg>
<svg style="left:26px;top:102px;" width="12" height="16" viewBox="0 0 12 16"><path d="M1 2.5Q1 0.5 3 0.5L3 3.5L4.5 4.5L5.8 3.5V0.5Q7.5 1 7.5 3Q7.5 5 5.5 5.5V15H2.5V5.5Q1 5 1 2.5Z" fill="#e8e8e8" stroke="#8a8a8a" stroke-width="0.9"/><rect x="8.3" y="0" width="1.6" height="7" fill="#555"/><path d="M7.2 7H11V14Q9 16 7.2 14Z" fill="#f0b020" stroke="#a87810" stroke-width="0.6"/></svg>
<svg style="left:44px;top:120px;" width="16" height="16" viewBox="0 0 16 16"><circle cx="8" cy="8" r="7.2" fill="#eef2fa" stroke="#6e6e6e" stroke-width="1.5"/><circle cx="8" cy="8" r="5.5" fill="none" stroke="#d0d8e8" stroke-width="0.8"/><path d="M8 3.5V8H12" fill="none" stroke="#3a3a3a" stroke-width="1.2"/><path d="M10.5 8H12.5" stroke="#e89030" stroke-width="1.2"/></svg>
<svg style="left:45px;top:139px;" width="14" height="16" viewBox="0 0 14 16"><rect x="0.5" y="0.5" width="13" height="15" fill="#9aaad0" stroke="#5a6a8a"/><rect x="0.5" y="0.5" width="2.5" height="15" fill="#6a7898"/><rect x="4" y="1.5" width="8.5" height="13" fill="#c4d0ea"/><path d="M8.5 2.5V9" stroke="#e89a20" stroke-width="2.2"/><circle cx="8.3" cy="11.3" r="2" fill="#d04a5a"/><circle cx="8.3" cy="11.3" r="0.8" fill="#f8d0d8"/></svg>
<svg style="left:44px;top:159px;" width="14" height="14" viewBox="0 0 14 14"><path d="M0.5 2.5H5L6 1H13.5V13.5H0.5Z" fill="#f4dc98" stroke="#c8a860" stroke-width="0.8"/><circle cx="4" cy="7" r="1.6" fill="#2e4a3a"/><circle cx="8" cy="7.5" r="1.6" fill="#2e4a3a"/><path d="M1.5 12Q4 8 6 10.5Q8 8.5 10.5 11" fill="none" stroke="#2e5a40" stroke-width="1.8"/><path d="M1.5 13.5Q4 11.5 6.5 13" fill="none" stroke="#50b070" stroke-width="1.6"/></svg>
<svg style="left:44px;top:176px;" width="16" height="15" viewBox="0 0 16 15"><rect x="5" y="0" width="11" height="9" fill="#8a9ac0"/><rect x="6" y="1" width="9" height="7" fill="#3a4aa8"/><rect x="8" y="9" width="6" height="4" fill="#8a9ac0"/><circle cx="4.5" cy="6" r="2.5" fill="#c8a860"/><circle cx="8.5" cy="7" r="2.3" fill="#a88a50"/><path d="M0 14Q0 9 4.5 9.5Q8 10 8 14Z" fill="#58b050"/></svg>
<svg style="left:44px;top:193px;" width="16" height="16" viewBox="0 0 16 16"><circle cx="8" cy="8" r="7.2" fill="#fafafa" stroke="#707070" stroke-width="1.5"/><path d="M4.5 4.5L11.5 11.5" stroke="#b01830" stroke-width="1.3"/><path d="M4 11Q4 4 8 5.5" fill="none" stroke="#b82838" stroke-width="1.5"/><path d="M12 5Q12 12 8 10.5" fill="none" stroke="#b82838" stroke-width="1.5"/></svg>
<svg style="left:45px;top:212px;" width="14" height="15" viewBox="0 0 14 15"><rect x="6" y="0" width="4" height="7" fill="#333"/><rect x="0.5" y="6.5" width="13" height="8" fill="#d8d8d8" stroke="#8a8a8a"/><rect x="2.5" y="9" width="2.5" height="3" fill="#111"/><rect x="9" y="9" width="2.5" height="3" fill="#111"/></svg>
<svg style="left:24px;top:230px;" width="18" height="16" viewBox="0 0 18 16"><circle cx="5" cy="5" r="4.5" fill="#c8c8c8" stroke="#7a7a7a"/><rect x="7" y="3" width="10" height="5" rx="1" fill="#3a9ad8"/><rect x="9" y="4.5" width="6" height="1.5" fill="#a8d8f8"/><rect x="0.5" y="9.5" width="16.5" height="6" rx="1.5" fill="#9a9a9a" stroke="#707070"/><rect x="2" y="11" width="10" height="3" fill="#e0e0e0"/></svg>
<svg style="left:43px;top:252px;" width="17" height="12" viewBox="0 0 17 12"><rect x="3" y="0.5" width="13.5" height="3.5" fill="#1e1e1e"/><rect x="13" y="1.5" width="2" height="1.5" fill="#ddd"/><rect x="0.5" y="4" width="12" height="7.5" fill="#e8e8e8" stroke="#707070"/><rect x="2.5" y="7" width="2" height="3" fill="#111"/><rect x="8" y="7" width="2" height="3" fill="#111"/></svg>
<svg style="left:26px;top:266px;" width="16" height="17" viewBox="0 0 16 17"><rect x="0.5" y="0.5" width="8" height="15.5" fill="#d0d4d8" stroke="#8a9096"/><path d="M2 3H7M2 5H7" stroke="#707880"/><circle cx="11" cy="11.5" r="4" fill="#a8b8c8" stroke="#7a8a9a" stroke-width="1.6" stroke-dasharray="1.5 1.2"/><circle cx="11" cy="11.5" r="1.6" fill="#f0f4f8"/></svg>
</body></html>
